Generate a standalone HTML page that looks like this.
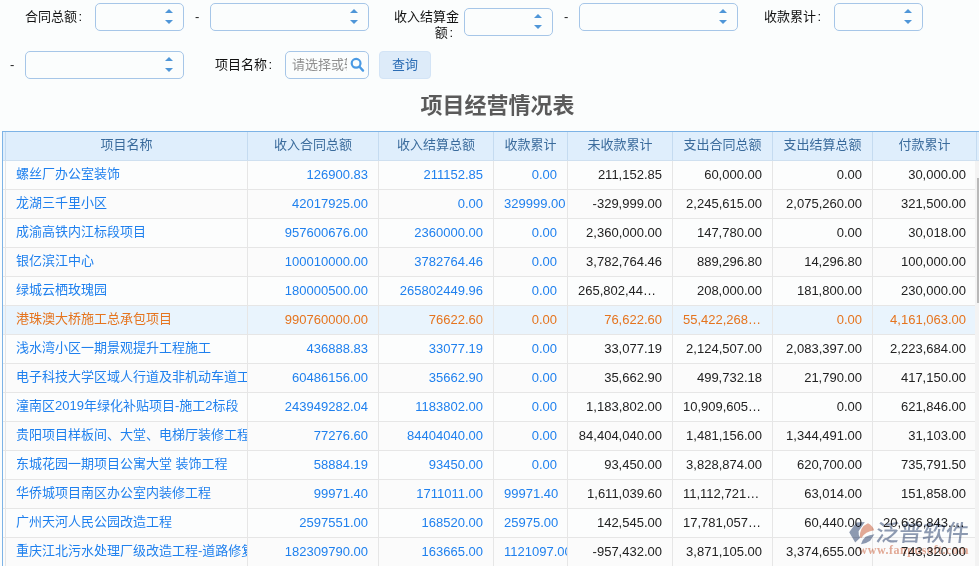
<!DOCTYPE html>
<html lang="zh-CN"><head><meta charset="utf-8"><title>项目经营情况表</title>
<style>
*{box-sizing:border-box;margin:0;padding:0}
html,body{width:979px;height:566px;overflow:hidden;background:#fbfdfd;}
body{position:relative;font-family:"Liberation Sans","Noto Sans CJK SC",sans-serif;font-size:13px;color:#222;}
.lbl{position:absolute;font-size:13px;line-height:17px;color:#111;white-space:nowrap}
.box{position:absolute;height:28px;border:1px solid #a6c6e8;border-radius:5px;background:#fbfdfd}
.box i{position:absolute;right:10px;width:0;height:0;border-left:4px solid transparent;border-right:4px solid transparent}
.box i.u{top:4.5px;border-bottom:4.5px solid #4f96d8}
.box i.d{top:15.5px;border-top:4.5px solid #4f96d8}
.dash{position:absolute;font-size:13px;line-height:17px;color:#222}
.btn{position:absolute;left:379px;top:51px;width:52px;height:28px;border-radius:4px;background:#ddebf9;border:1px solid #d3e4f6;color:#2c6db4;font-size:13px;line-height:26px;text-align:center}
.title{position:absolute;left:0;top:91px;width:995px;text-align:center;font-size:22px;font-weight:bold;line-height:30px;color:#5a5a5a}
.grid{position:absolute;left:2px;top:131px;width:977px;height:435px;border-left:1px solid #7db3e6;border-top:1px solid #7db3e6;overflow:hidden;background:#fff}
.hrow{position:absolute;left:0;top:0;width:976px;height:29px;background:#dfeefc;border-bottom:1px solid #cfe0f0}
.hc{position:absolute;top:0;height:28px;border-right:1px solid #c5dbf0;text-align:center;line-height:25px;color:#3a6b9c;font-size:13px;overflow:hidden;white-space:nowrap}
.hc.last{border-right:none}
.row{position:absolute;left:0;width:972px;height:29px;border-bottom:1px solid #e6e6e6;background:#fcfdfd}
.row.alt{background:#fbfbfb}
.row.hl{background:#e9f4fd}
.c{position:absolute;top:0;height:28px;border-right:1px solid #e6e6e6;line-height:26px;font-size:13px;white-space:nowrap;overflow:hidden;padding:0 10px;text-align:right;color:#222}
.c.name{text-align:left;padding:0 0 0 10px;color:#1f80ee}
.c.lnk{color:#1f80ee;padding:0}
.c.lnk span{margin:0 10px}
.c span{display:block;white-space:nowrap}
.c.num span{overflow:hidden;text-overflow:ellipsis}
.row.hl .c{color:#e5741e}
.vtrack{position:absolute;left:975px;top:161px;width:4px;height:405px;background:#f3f3f3}
.vthumb{position:absolute;left:977px;top:178px;width:2px;height:125px;background:#b9b9b9}
.lbl b{font-weight:normal;margin-left:1.5px}
.wm{position:absolute;left:845px;top:518px}
.c.lnk,.c.num{line-height:27px}

</style></head><body>
<div class="lbl" style="left:25px;top:8px">合同总额<b>:</b></div>
<div class="box" style="left:95px;top:3px;width:89px"><i class="u"></i><i class="d"></i></div>
<div class="dash" style="left:195px;top:8px">-</div>
<div class="box" style="left:210px;top:3px;width:159px"><i class="u"></i><i class="d"></i></div>
<div class="lbl" style="left:394px;top:9px;width:65px;white-space:normal;text-align:right;line-height:16px">收入结算金额<b>:</b><i style="display:inline-block;width:6px"></i></div>
<div class="box" style="left:464px;top:8px;width:89px"><i class="u"></i><i class="d"></i></div>
<div class="dash" style="left:564px;top:8px">-</div>
<div class="box" style="left:579px;top:3px;width:159px"><i class="u"></i><i class="d"></i></div>
<div class="lbl" style="left:764px;top:8px">收款累计<b>:</b></div>
<div class="box" style="left:834px;top:3px;width:89px"><i class="u"></i><i class="d"></i></div>
<div class="dash" style="left:10px;top:56px">-</div>
<div class="box" style="left:25px;top:51px;width:159px"><i class="u"></i><i class="d"></i></div>
<div class="lbl" style="left:215px;top:56px">项目名称<b>:</b></div>
<div class="box" style="left:285px;top:51px;width:84px;overflow:hidden"><span style="position:absolute;left:6px;top:0;width:55px;overflow:hidden;white-space:nowrap;line-height:26px;color:#8f8f8f;font-size:13px">请选择或输入</span>
<svg style="position:absolute;left:63px;top:5px" width="16" height="16" viewBox="0 0 16 16"><circle cx="7.1" cy="6.3" r="4.4" fill="none" stroke="#4a9ae4" stroke-width="2.2"/><path d="M10.5 9.8 L14 13.6" stroke="#4a9ae4" stroke-width="2.4" stroke-linecap="round"/></svg></div>
<div class="btn">查询</div>
<div class="title">项目经营情况表</div>
<div class="grid">
<div class="hrow"><div class="hc" style="left:0;width:3px"></div><div class="hc" style="left:3px;width:242px"><span>项目名称</span></div><div class="hc" style="left:245px;width:131px"><span>收入合同总额</span></div><div class="hc" style="left:376px;width:115px"><span>收入结算总额</span></div><div class="hc" style="left:491px;width:74px"><span>收款累计</span></div><div class="hc" style="left:565px;width:105px"><span>未收款累计</span></div><div class="hc" style="left:670px;width:100px"><span>支出合同总额</span></div><div class="hc" style="left:770px;width:100px"><span>支出结算总额</span></div><div class="hc" style="left:870px;width:104px"><span>付款累计</span></div><div class="hc last" style="left:974px;width:6px"></div></div>
<div class="row" style="top:29px"><div class="c" style="left:0;width:3px;padding:0"></div><div class="c name" style="left:3px;width:242px"><span>螺丝厂办公室装饰</span></div><div class="c lnk" style="left:245px;width:131px"><span>126900.83</span></div><div class="c lnk" style="left:376px;width:115px"><span>211152.85</span></div><div class="c lnk" style="left:491px;width:74px"><span>0.00</span></div><div class="c num" style="left:565px;width:105px"><span>211,152.85</span></div><div class="c num" style="left:670px;width:100px"><span>60,000.00</span></div><div class="c num" style="left:770px;width:100px"><span>0.00</span></div><div class="c num" style="left:870px;width:104px"><span>30,000.00</span></div></div>
<div class="row alt" style="top:58px"><div class="c" style="left:0;width:3px;padding:0"></div><div class="c name" style="left:3px;width:242px"><span>龙湖三千里小区</span></div><div class="c lnk" style="left:245px;width:131px"><span>42017925.00</span></div><div class="c lnk" style="left:376px;width:115px"><span>0.00</span></div><div class="c lnk" style="left:491px;width:74px"><span>329999.00</span></div><div class="c num" style="left:565px;width:105px"><span>-329,999.00</span></div><div class="c num" style="left:670px;width:100px"><span>2,245,615.00</span></div><div class="c num" style="left:770px;width:100px"><span>2,075,260.00</span></div><div class="c num" style="left:870px;width:104px"><span>321,500.00</span></div></div>
<div class="row" style="top:87px"><div class="c" style="left:0;width:3px;padding:0"></div><div class="c name" style="left:3px;width:242px"><span>成渝高铁内江标段项目</span></div><div class="c lnk" style="left:245px;width:131px"><span>957600676.00</span></div><div class="c lnk" style="left:376px;width:115px"><span>2360000.00</span></div><div class="c lnk" style="left:491px;width:74px"><span>0.00</span></div><div class="c num" style="left:565px;width:105px"><span>2,360,000.00</span></div><div class="c num" style="left:670px;width:100px"><span>147,780.00</span></div><div class="c num" style="left:770px;width:100px"><span>0.00</span></div><div class="c num" style="left:870px;width:104px"><span>30,018.00</span></div></div>
<div class="row alt" style="top:116px"><div class="c" style="left:0;width:3px;padding:0"></div><div class="c name" style="left:3px;width:242px"><span>银亿滨江中心</span></div><div class="c lnk" style="left:245px;width:131px"><span>100010000.00</span></div><div class="c lnk" style="left:376px;width:115px"><span>3782764.46</span></div><div class="c lnk" style="left:491px;width:74px"><span>0.00</span></div><div class="c num" style="left:565px;width:105px"><span>3,782,764.46</span></div><div class="c num" style="left:670px;width:100px"><span>889,296.80</span></div><div class="c num" style="left:770px;width:100px"><span>14,296.80</span></div><div class="c num" style="left:870px;width:104px"><span>100,000.00</span></div></div>
<div class="row" style="top:145px"><div class="c" style="left:0;width:3px;padding:0"></div><div class="c name" style="left:3px;width:242px"><span>绿城云栖玫瑰园</span></div><div class="c lnk" style="left:245px;width:131px"><span>180000500.00</span></div><div class="c lnk" style="left:376px;width:115px"><span>265802449.96</span></div><div class="c lnk" style="left:491px;width:74px"><span>0.00</span></div><div class="c num" style="left:565px;width:105px"><span>265,802,449.96</span></div><div class="c num" style="left:670px;width:100px"><span>208,000.00</span></div><div class="c num" style="left:770px;width:100px"><span>181,800.00</span></div><div class="c num" style="left:870px;width:104px"><span>230,000.00</span></div></div>
<div class="row alt hl" style="top:174px"><div class="c" style="left:0;width:3px;padding:0"></div><div class="c name" style="left:3px;width:242px"><span>港珠澳大桥施工总承包项目</span></div><div class="c lnk" style="left:245px;width:131px"><span>990760000.00</span></div><div class="c lnk" style="left:376px;width:115px"><span>76622.60</span></div><div class="c lnk" style="left:491px;width:74px"><span>0.00</span></div><div class="c num" style="left:565px;width:105px"><span>76,622.60</span></div><div class="c num" style="left:670px;width:100px"><span>55,422,268.00</span></div><div class="c num" style="left:770px;width:100px"><span>0.00</span></div><div class="c num" style="left:870px;width:104px"><span>4,161,063.00</span></div></div>
<div class="row" style="top:203px"><div class="c" style="left:0;width:3px;padding:0"></div><div class="c name" style="left:3px;width:242px"><span>浅水湾小区一期景观提升工程施工</span></div><div class="c lnk" style="left:245px;width:131px"><span>436888.83</span></div><div class="c lnk" style="left:376px;width:115px"><span>33077.19</span></div><div class="c lnk" style="left:491px;width:74px"><span>0.00</span></div><div class="c num" style="left:565px;width:105px"><span>33,077.19</span></div><div class="c num" style="left:670px;width:100px"><span>2,124,507.00</span></div><div class="c num" style="left:770px;width:100px"><span>2,083,397.00</span></div><div class="c num" style="left:870px;width:104px"><span>2,223,684.00</span></div></div>
<div class="row alt" style="top:232px"><div class="c" style="left:0;width:3px;padding:0"></div><div class="c name" style="left:3px;width:242px"><span>电子科技大学区域人行道及非机动车道工程</span></div><div class="c lnk" style="left:245px;width:131px"><span>60486156.00</span></div><div class="c lnk" style="left:376px;width:115px"><span>35662.90</span></div><div class="c lnk" style="left:491px;width:74px"><span>0.00</span></div><div class="c num" style="left:565px;width:105px"><span>35,662.90</span></div><div class="c num" style="left:670px;width:100px"><span>499,732.18</span></div><div class="c num" style="left:770px;width:100px"><span>21,790.00</span></div><div class="c num" style="left:870px;width:104px"><span>417,150.00</span></div></div>
<div class="row" style="top:261px"><div class="c" style="left:0;width:3px;padding:0"></div><div class="c name" style="left:3px;width:242px"><span>潼南区2019年绿化补贴项目-施工2标段</span></div><div class="c lnk" style="left:245px;width:131px"><span>243949282.04</span></div><div class="c lnk" style="left:376px;width:115px"><span>1183802.00</span></div><div class="c lnk" style="left:491px;width:74px"><span>0.00</span></div><div class="c num" style="left:565px;width:105px"><span>1,183,802.00</span></div><div class="c num" style="left:670px;width:100px"><span>10,909,605.00</span></div><div class="c num" style="left:770px;width:100px"><span>0.00</span></div><div class="c num" style="left:870px;width:104px"><span>621,846.00</span></div></div>
<div class="row alt" style="top:290px"><div class="c" style="left:0;width:3px;padding:0"></div><div class="c name" style="left:3px;width:242px"><span>贵阳项目样板间、大堂、电梯厅装修工程</span></div><div class="c lnk" style="left:245px;width:131px"><span>77276.60</span></div><div class="c lnk" style="left:376px;width:115px"><span>84404040.00</span></div><div class="c lnk" style="left:491px;width:74px"><span>0.00</span></div><div class="c num" style="left:565px;width:105px"><span>84,404,040.00</span></div><div class="c num" style="left:670px;width:100px"><span>1,481,156.00</span></div><div class="c num" style="left:770px;width:100px"><span>1,344,491.00</span></div><div class="c num" style="left:870px;width:104px"><span>31,103.00</span></div></div>
<div class="row" style="top:319px"><div class="c" style="left:0;width:3px;padding:0"></div><div class="c name" style="left:3px;width:242px"><span>东城花园一期项目公寓大堂 装饰工程</span></div><div class="c lnk" style="left:245px;width:131px"><span>58884.19</span></div><div class="c lnk" style="left:376px;width:115px"><span>93450.00</span></div><div class="c lnk" style="left:491px;width:74px"><span>0.00</span></div><div class="c num" style="left:565px;width:105px"><span>93,450.00</span></div><div class="c num" style="left:670px;width:100px"><span>3,828,874.00</span></div><div class="c num" style="left:770px;width:100px"><span>620,700.00</span></div><div class="c num" style="left:870px;width:104px"><span>735,791.50</span></div></div>
<div class="row alt" style="top:348px"><div class="c" style="left:0;width:3px;padding:0"></div><div class="c name" style="left:3px;width:242px"><span>华侨城项目南区办公室内装修工程</span></div><div class="c lnk" style="left:245px;width:131px"><span>99971.40</span></div><div class="c lnk" style="left:376px;width:115px"><span>1711011.00</span></div><div class="c lnk" style="left:491px;width:74px"><span>99971.40</span></div><div class="c num" style="left:565px;width:105px"><span>1,611,039.60</span></div><div class="c num" style="left:670px;width:100px"><span>11,112,721.00</span></div><div class="c num" style="left:770px;width:100px"><span>63,014.00</span></div><div class="c num" style="left:870px;width:104px"><span>151,858.00</span></div></div>
<div class="row" style="top:377px"><div class="c" style="left:0;width:3px;padding:0"></div><div class="c name" style="left:3px;width:242px"><span>广州天河人民公园改造工程</span></div><div class="c lnk" style="left:245px;width:131px"><span>2597551.00</span></div><div class="c lnk" style="left:376px;width:115px"><span>168520.00</span></div><div class="c lnk" style="left:491px;width:74px"><span>25975.00</span></div><div class="c num" style="left:565px;width:105px"><span>142,545.00</span></div><div class="c num" style="left:670px;width:100px"><span>17,781,057.00</span></div><div class="c num" style="left:770px;width:100px"><span>60,440.00</span></div><div class="c num" style="left:870px;width:104px"><span>20,636,843.00</span></div></div>
<div class="row alt" style="top:406px"><div class="c" style="left:0;width:3px;padding:0"></div><div class="c name" style="left:3px;width:242px"><span>重庆江北污水处理厂级改造工程-道路修复工程</span></div><div class="c lnk" style="left:245px;width:131px"><span>182309790.00</span></div><div class="c lnk" style="left:376px;width:115px"><span>163665.00</span></div><div class="c lnk" style="left:491px;width:74px"><span>1121097.00</span></div><div class="c num" style="left:565px;width:105px"><span>-957,432.00</span></div><div class="c num" style="left:670px;width:100px"><span>3,871,105.00</span></div><div class="c num" style="left:770px;width:100px"><span>3,374,655.00</span></div><div class="c num" style="left:870px;width:104px"><span>743,320.00</span></div></div>
</div>
<div class="vtrack"></div><div class="vthumb"></div>
<svg class="wm" style="mix-blend-mode:multiply" width="134" height="48" viewBox="845 518 134 48">
<g opacity="0.9">
<path d="M849.2 532.3 L856.4 522.4 L864.8 522 L858.6 531.3 Q858.2 535 860.2 537.8 L855.2 542.6 Z" fill="#8391ab"/>
<path d="M859.9 537.6 Q859.3 527 868 523.2 Q872.6 525.6 874.2 530.2 Q865.2 531.4 861.4 538 Z" fill="#e3a28c"/>
<path d="M861 544.2 Q862.3 539.5 865.6 536.8 Q869.5 534.8 874.4 534.2 L870.2 540.8 Q866.2 543.8 861 544.2 Z" fill="#8391ab"/>
<text x="875" y="541.5" font-family="'Liberation Sans','Noto Sans CJK SC',sans-serif" font-size="23" font-weight="500" fill="#8391ab" transform="translate(875 541.5) skewX(-7) translate(-875 -541.5)" textLength="93" lengthAdjust="spacingAndGlyphs">泛普软件</text>
<text x="858.5" y="554" font-family="'Liberation Serif',serif" font-size="12" font-weight="bold" fill="#e3a28c" textLength="110" lengthAdjust="spacing">www.fanpusoft.com</text>
</g>
</svg>
</body></html>
